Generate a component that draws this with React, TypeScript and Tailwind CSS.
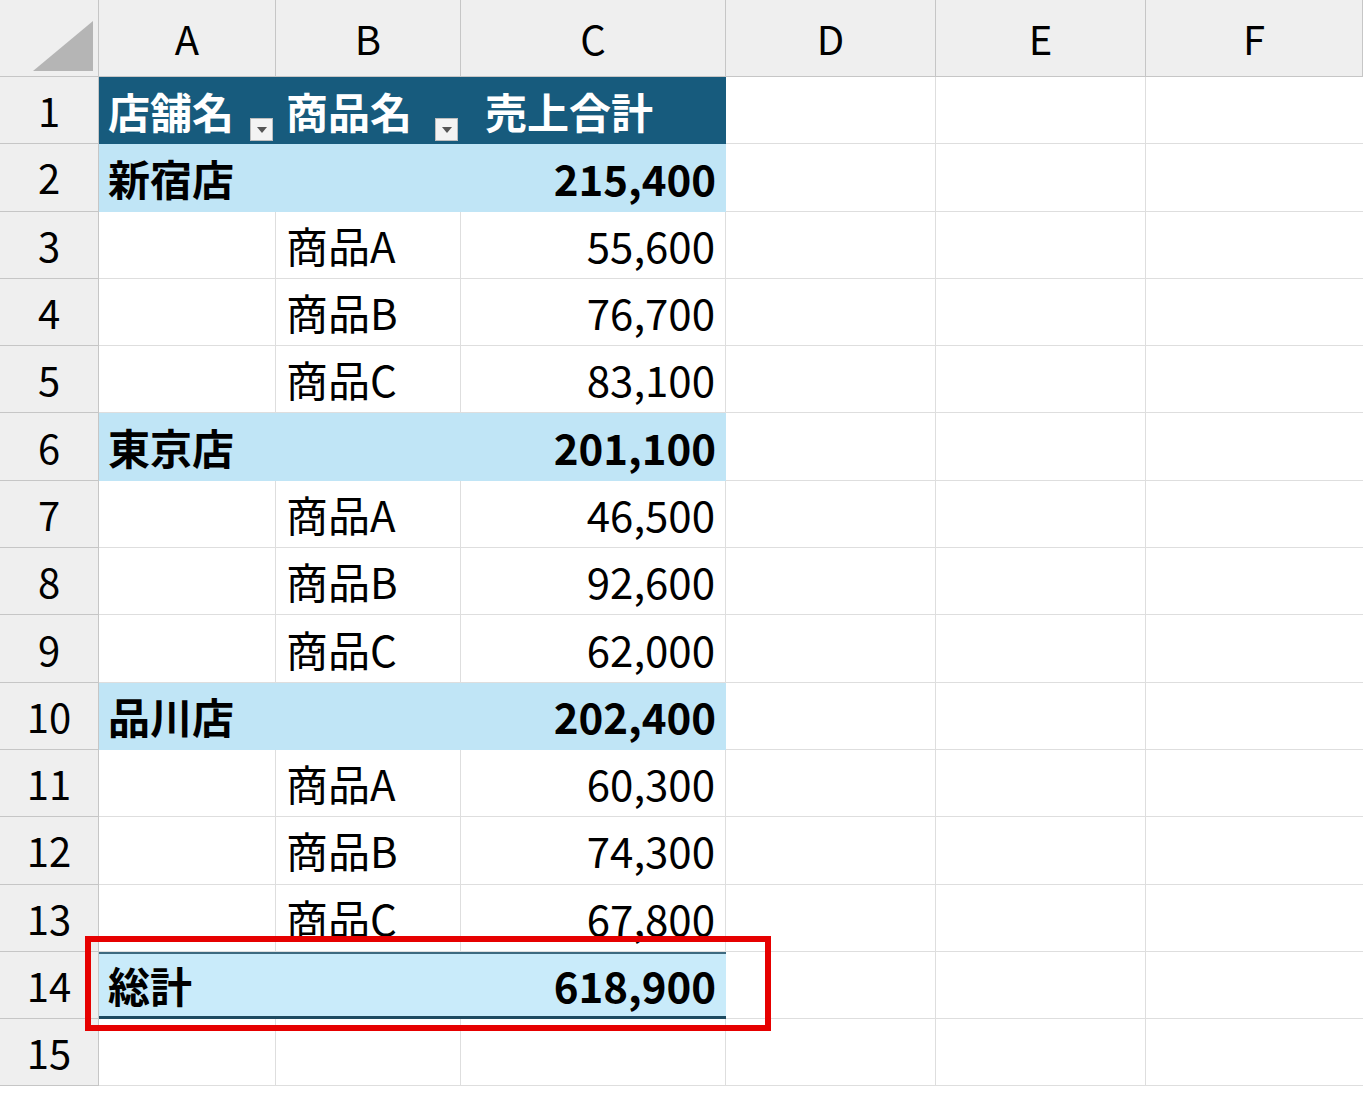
import React from "react";

type Row = { a?: string; b?: string; c?: string; kind: "head" | "sub" | "item" | "total" | "blank" };

const rows: Row[] = [
  { kind: "head", a: "店舗名", b: "商品名", c: "売上合計" },
  { kind: "sub", a: "新宿店", c: "215,400" },
  { kind: "item", b: "商品A", c: "55,600" },
  { kind: "item", b: "商品B", c: "76,700" },
  { kind: "item", b: "商品C", c: "83,100" },
  { kind: "sub", a: "東京店", c: "201,100" },
  { kind: "item", b: "商品A", c: "46,500" },
  { kind: "item", b: "商品B", c: "92,600" },
  { kind: "item", b: "商品C", c: "62,000" },
  { kind: "sub", a: "品川店", c: "202,400" },
  { kind: "item", b: "商品A", c: "60,300" },
  { kind: "item", b: "商品B", c: "74,300" },
  { kind: "item", b: "商品C", c: "67,800" },
  { kind: "total", a: "総計", c: "618,900" },
  { kind: "blank" },
];

const cols = ["A", "B", "C", "D", "E", "F"];

function Filter() {
  return (
    <span className="absolute right-[3px] bottom-[3px] w-[23px] h-[23px] bg-[#f3f3f3] border border-[#bdbdbd] flex items-center justify-center">
      <svg width="10" height="6" viewBox="0 0 10 6"><path d="M0 0h10L5 6z" fill="#555" /></svg>
    </span>
  );
}

export default function App() {
  const font = { fontFamily: '"Noto Sans CJK JP", "Noto Sans", sans-serif' };
  return (
    <div className="w-[1363px] h-[1094px] bg-white overflow-hidden relative" style={font}>
      <div className="grid grid-cols-[99px_177px_185px_265px_210px_210px_217px] grid-rows-[77px_repeat(15,67.3px)] text-[42px] leading-none text-black">
        <div className="bg-[#efefef] border-r border-b border-[#c6c6c6] relative">
          <svg className="absolute right-[5px] bottom-[5px]" width="60" height="50" viewBox="0 0 60 50"><path d="M60 0V50H0z" fill="#b5b5b5" /></svg>
        </div>
        {cols.map((c) => (
          <div key={c} className="bg-[#efefef] border-r border-b border-[#c6c6c6] flex items-center justify-center text-[40px]">{c}</div>
        ))}
        {rows.map((r, i) => {
          const bg =
            r.kind === "head" ? "bg-[#175b7d] text-white font-bold" :
            r.kind === "sub" ? "bg-[#c0e5f6] font-bold" :
            r.kind === "total" ? "bg-[#c9ebfa] font-bold border-t-2 border-t-[#3d6a80] border-b-[3px] border-b-[#1d4a60]" : "";
          const grid = r.kind === "item" || r.kind === "blank" ? "border-r border-b border-[#dedede]" : "";
          return (
            <React.Fragment key={i}>
              <div className="bg-[#efefef] border-r border-b border-[#c6c6c6] flex items-center justify-center text-[40px]">{i + 1}</div>
              <div className={`col-span-3 grid grid-cols-[177px_185px_265px] ${bg}`}>
                <div className={`relative flex items-center pl-[9px] whitespace-nowrap ${grid}`}>
                  {r.a}
                  {r.kind === "head" && <Filter />}
                </div>
                <div className={`relative flex items-center pl-[10px] whitespace-nowrap ${grid}`}>
                  {r.b}
                  {r.kind === "head" && <Filter />}
                </div>
                <div className={`flex items-center whitespace-nowrap ${r.kind === "head" ? "pl-[24px]" : "justify-end pr-[10px]"} ${grid} ${r.kind === "item" || r.kind === "blank" ? "" : ""}`}>
                  {r.c}
                </div>
              </div>
              <div className="border-r border-b border-[#dedede]" />
              <div className="border-r border-b border-[#dedede]" />
              <div className="border-b border-[#dedede]" />
            </React.Fragment>
          );
        })}
      </div>
      <div className="absolute left-[85px] top-[936px] w-[686px] h-[95px] border-[6px] border-[#e60000]" />
    </div>
  );
}
